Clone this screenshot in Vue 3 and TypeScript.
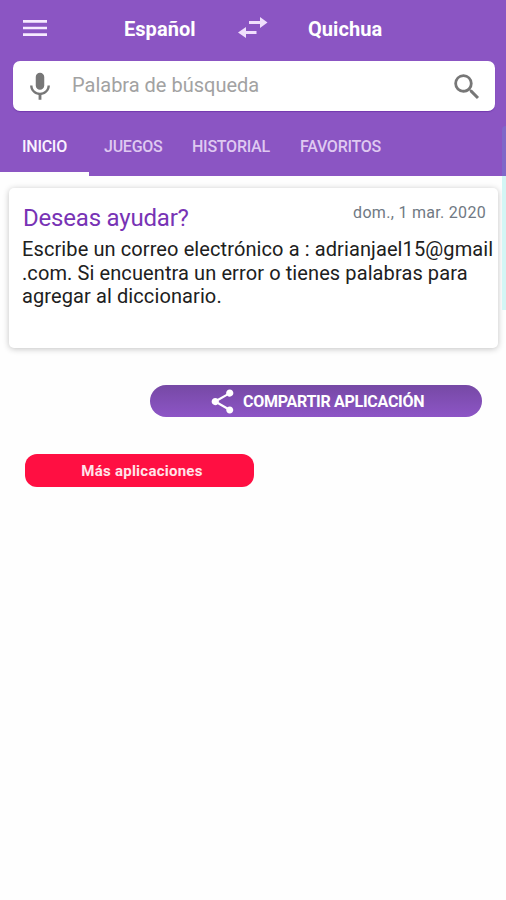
<script setup lang="ts">
import { ref } from 'vue'

interface Tab {
  id: string
  label: string
}

const tabs: Tab[] = [
  { id: 'inicio', label: 'INICIO' },
  { id: 'juegos', label: 'JUEGOS' },
  { id: 'historial', label: 'HISTORIAL' },
  { id: 'favoritos', label: 'FAVORITOS' },
]
const active = ref<string>('inicio')
const query = ref<string>('')
</script>

<template>
  <div class="screen">
    <header class="header">
      <div class="toolbar">
        <svg class="menu" viewBox="0 0 24 24"><path d="M3 18h18v-2H3v2zm0-5h18v-2H3v2zm0-7v2h18V6H3z" /></svg>
        <span class="lang from">Español</span>
        <svg class="swap" viewBox="0 0 30 22"><path d="M11 4h11V0l7.500 5.500-7.500 5.500V7H11zM18.500 14H8v-4L0 15.500 8 21v-4h10.500z" /></svg>
        <span class="lang to">Quichua</span>
      </div>
      <div class="search">
        <svg class="glyph" viewBox="0 0 24 24"><path d="M12 14c1.660 0 3-1.340 3-3V5c0-1.660-1.340-3-3-3S9 3.340 9 5v6c0 1.660 1.340 3 3 3zm5.300-3c0 3-2.540 5.100-5.300 5.100S6.700 14 6.700 11H5c0 3.410 2.720 6.230 6 6.720V21h2v-3.280c3.280-.480 6-3.300 6-6.720h-1.700z" /></svg>
        <input v-model="query" class="input" type="text" placeholder="Palabra de búsqueda" />
        <svg class="glyph" viewBox="0 0 24 24"><path d="M15.500 14h-.790l-.280-.270A6.471 6.471 0 0 0 16 9.500 6.500 6.500 0 1 0 9.500 16c1.610 0 3.090-.590 4.230-1.570l.270.280v.790l5 4.990L20.490 19l-4.990-5zm-6 0C7.010 14 5 11.990 5 9.500S7.010 5 9.500 5 14 7.010 14 9.500 11.990 14 9.500 14z" /></svg>
      </div>
      <nav class="tabs">
        <button v-for="tab in tabs" :key="tab.id" :class="['tab', tab.id, { active: tab.id === active }]" @click="active = tab.id">{{ tab.label }}</button>
      </nav>
    </header>

    <main class="content">
      <article class="card">
        <div class="card-head">
          <h2 class="title">Deseas ayudar?</h2>
          <time class="date">dom., 1 mar. 2020</time>
        </div>
        <p class="message">Escribe un correo electrónico a : adrianjael15@gmail<br />.com. Si encuentra un error o tienes palabras para<br />agregar al diccionario.</p>
      </article>
      <button class="share">
        <svg class="share-icon" viewBox="0 0 24 24"><path d="M18 16.080c-.760 0-1.440.300-1.960.770L8.910 12.700c.050-.230.090-.460.090-.700s-.040-.470-.090-.700l7.050-4.110c.540.500 1.250.810 2.040.810 1.660 0 3-1.340 3-3s-1.340-3-3-3-3 1.340-3 3c0 .240.040.470.090.700L8.040 9.810C7.500 9.310 6.790 9 6 9c-1.660 0-3 1.340-3 3s1.340 3 3 3c.790 0 1.500-.310 2.040-.810l7.120 4.160c-.050.210-.080.430-.080.650 0 1.610 1.310 2.920 2.920 2.920s2.920-1.310 2.920-2.920-1.310-2.920-2.920-2.920z" /></svg>
        <span>COMPARTIR APLICACIÓN</span>
      </button>
      <button class="more">Más aplicaciones</button>
    </main>
    <div class="edge-handle"></div>
  </div>
</template>

<style>
body {
  background: #fefefe;
}
</style>

<style scoped>
.screen {
  position: relative;
  width: 506px;
  height: 900px;
  overflow: hidden;
  background: #fefefe;
  font-family: Roboto, 'Liberation Sans', sans-serif;
}
button {
  border: 0;
  padding: 0;
  font-family: inherit;
  white-space: nowrap;
}
.header {
  height: 176px;
  background: #8b55c3;
}
.toolbar {
  display: flex;
  align-items: center;
  height: 61px;
  box-sizing: border-box;
  padding: 0 0 5px 19px;
}
.menu {
  width: 32px;
  height: 32px;
  fill: #f6eaff;
}
.lang {
  padding-top: 2px;
  color: #fff;
  font-size: 20px;
  font-weight: 700;
  letter-spacing: 0.05px;
  white-space: nowrap;
}
.from {
  width: 114px;
  margin-left: 73px;
}
.swap {
  width: 30px;
  height: 22px;
  fill: #f0dffc;
}
.to {
  margin-left: 40px;
}
.search {
  display: flex;
  align-items: center;
  box-sizing: border-box;
  width: 482px;
  height: 50px;
  margin-left: 13px;
  padding: 2px 11px 0 10px;
  border-radius: 7px;
  background: #fff;
  box-shadow: 0 1px 1px #733aaf;
}
.glyph {
  flex: none;
  width: 34px;
  height: 34px;
  fill: #777;
}
.input {
  flex: 1;
  min-width: 0;
  margin: 0 0 4px 15px;
  padding: 0;
  border: 0;
  outline: 0;
  background: transparent;
  color: #333;
  font-family: inherit;
  font-size: 20px;
}
.input::placeholder {
  color: #a2a2a2;
  opacity: 1;
}
.tabs {
  display: flex;
  height: 65px;
}
.tab {
  box-sizing: border-box;
  height: 65px;
  padding: 10px 0 0 15px;
  border-bottom: 4px solid transparent;
  background: transparent;
  color: #dfc9f1;
  font-size: 16px;
  font-weight: 500;
  letter-spacing: -0.25px;
  text-align: left;
}
.tab.active {
  border-bottom-color: #fefefe;
  color: #faf2ff;
}
.inicio {
  width: 89px;
  padding-left: 22px;
}
.juegos {
  width: 88px;
}
.historial {
  width: 108px;
}
.favoritos {
  width: 120px;
}
.content {
  display: flex;
  flex-direction: column;
  padding-top: 12px;
}
.card {
  box-sizing: border-box;
  width: 489px;
  height: 160px;
  margin-left: 9px;
  padding: 14px 0 0 13px;
  border-radius: 5px;
  background: #fff;
  box-shadow: 0 1px 6px rgba(0, 0, 0, 0.24);
}
.card-head {
  display: flex;
  justify-content: space-between;
  height: 36px;
  padding-right: 12px;
}
.title {
  margin: 0 0 0 1px;
  color: #7833b5;
  font-size: 24px;
  font-weight: 400;
  line-height: 32px;
  letter-spacing: -0.2px;
}
.date {
  color: #707983;
  font-size: 16px;
  line-height: 22px;
  letter-spacing: 0.3px;
}
.message {
  margin: 0;
  color: #202020;
  font-size: 20px;
  line-height: 23.500px;
  letter-spacing: 0.1px;
  white-space: nowrap;
}
.share {
  display: flex;
  align-items: center;
  width: 332px;
  height: 32px;
  margin: 37px 0 0 150px;
  padding-left: 58px;
  border-radius: 16px;
  background: linear-gradient(#7649a5, #8d55c6);
  color: #fff;
  font-size: 16px;
  font-weight: 700;
  letter-spacing: -0.28px;
}
.share-icon {
  width: 29px;
  height: 29px;
  margin-right: 6px;
  fill: #fff;
}
.more {
  width: 229px;
  height: 33px;
  margin: 37px 0 0 25px;
  padding-left: 5px;
  border-radius: 12px;
  background: #ff0f42;
  color: #ffe4e9;
  font-size: 15px;
  font-weight: 700;
  letter-spacing: 0.25px;
}
.edge-handle {
  position: absolute;
  top: 126px;
  right: 0;
  width: 4px;
  height: 184px;
  border-radius: 4px 0 0 0;
  background: linear-gradient(rgba(115, 125, 208, 0.45) 50px, #d3f6f5 50px);
}
</style>
